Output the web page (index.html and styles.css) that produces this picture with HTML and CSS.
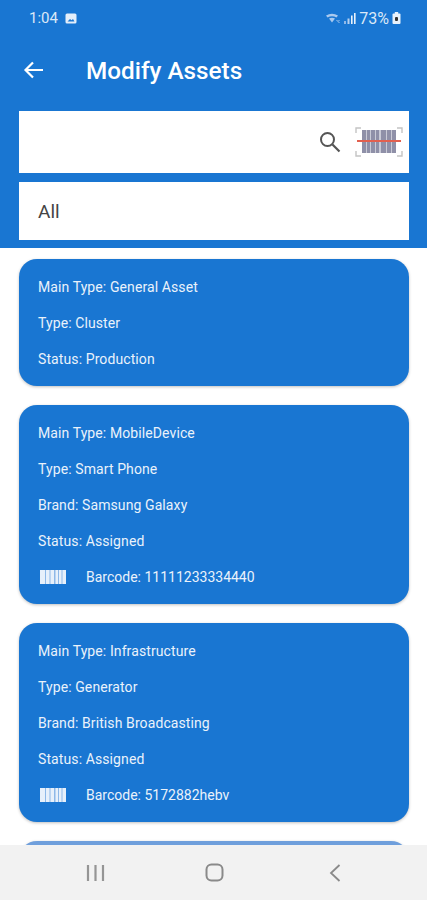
FILE: index.html
```html
<!DOCTYPE html>
<html lang="en">
<head>
  <meta charset="UTF-8" />
  <title>Modify Assets</title>
  <link rel="stylesheet" href="styles.css">
</head>
<body>
  <div class="screen">
    <header class="top">
      <div class="status-bar">
        <div class="status-left">
          <span>1:04</span>
          <svg width="12" height="11" viewBox="0 0 12 11"><rect x="0.5" y="0.5" width="11" height="10" rx="1.5" fill="#e3eefa"/><path d="M2.5 8.5 L5 6 L6.5 7.2 L8 6 L9.5 8.5 Z" fill="#1976d2"/></svg>
        </div>
        <div class="status-right">
          <svg width="15" height="11" viewBox="0 0 15 11"><path d="M0 2.500 Q6 -1 12 2.500 L10.500 4.500 Q6 2 1.500 4.500 Z M3 5.500 Q6 3.800 9 5.500 L6 9.500 Z" fill="#a9c9ee"/><path d="M10.500 7 l3 3 M13.500 7 l-1 1" stroke="#a9c9ee" stroke-width="1"/></svg>
          <svg width="12" height="12" viewBox="0 0 12 12"><rect x="0" y="9" width="2" height="3" fill="#8fb8e8"/><rect x="3.500" y="6.500" width="2" height="5.500" fill="#b5d0f0"/><rect x="7" y="3.500" width="1.600" height="8.500" fill="#e8f1fb"/><rect x="10" y="1" width="1.600" height="11" fill="#e8f1fb"/></svg>
          <span class="battery-pct">73%</span>
          <svg width="9" height="12" viewBox="0 0 9 12"><rect x="2.800" y="0" width="3.400" height="2" fill="#e8f1fb"/><rect x="0.500" y="1.500" width="8" height="10.500" rx="1" fill="#e8f1fb"/><rect x="3" y="5" width="3" height="4" rx="1" fill="#333"/></svg>
        </div>
      </div>

      <div class="app-bar">
        <svg class="back" width="24" height="24" viewBox="0 0 24 24"><path d="M21 12 H4 M11 4.500 L3.500 12 L11 19.500" fill="none" stroke="#fff" stroke-width="2.200"/></svg>
        <h1>Modify Assets</h1>
      </div>

      <div class="search-box">
        <svg class="search-icon" width="24" height="24" viewBox="0 0 24 24"><circle cx="9.500" cy="9.500" r="6.500" fill="none" stroke="#555" stroke-width="2"/><path d="M14.500 14.500 L21.500 21.500" stroke="#555" stroke-width="2.200"/></svg>
        <svg class="scan-icon" width="48" height="30" viewBox="0 0 48 30">
          <path d="M1 6 V1 H6 M42 1 H47 V6 M1 24 V29 H6 M42 29 H47 V24" fill="none" stroke="#c4c4c4" stroke-width="1.400"/>
          <rect x="7" y="3" width="34" height="23" fill="#8f90a8"/>
          <g fill="#c9cad6">
            <rect x="11" y="3" width="1" height="23"/>
            <rect x="15" y="3" width="1" height="23"/>
            <rect x="20" y="3" width="1" height="23"/>
            <rect x="24" y="3" width="2" height="23"/>
            <rect x="31" y="3" width="1" height="23"/>
            <rect x="36" y="3" width="1" height="23"/>
          </g>
          <rect x="2" y="13" width="44" height="2" fill="#e2604f"/>
        </svg>
      </div>

      <div class="select-box">All</div>
    </header>

    <main class="list">
      <section class="card">
        <p>Main Type: General Asset</p>
        <p>Type: Cluster</p>
        <p>Status: Production</p>
      </section>

      <section class="card">
        <p>Main Type: MobileDevice</p>
        <p>Type: Smart Phone</p>
        <p>Brand: Samsung Galaxy</p>
        <p>Status: Assigned</p>
        <p class="barcode">
          <svg width="26" height="14" viewBox="0 0 26 14"><rect width="26" height="14" fill="#e6f0fb"/><path d="M5 0h1v14H5z M9.500 0h1v14h-1z M14 0h1.500v14H14z M18 0h1v14h-1z M21.500 0h1v14h-1z" fill="#8db8e8"/></svg>
          <span>Barcode: 11111233334440</span>
        </p>
      </section>

      <section class="card">
        <p>Main Type: Infrastructure</p>
        <p>Type: Generator</p>
        <p>Brand: British Broadcasting</p>
        <p>Status: Assigned</p>
        <p class="barcode">
          <svg width="26" height="14" viewBox="0 0 26 14"><rect width="26" height="14" fill="#e6f0fb"/><path d="M5 0h1v14H5z M9.500 0h1v14h-1z M14 0h1.500v14H14z M18 0h1v14h-1z M21.500 0h1v14h-1z" fill="#8db8e8"/></svg>
          <span>Barcode: 5172882hebv</span>
        </p>
      </section>

      <section class="card card-faded"></section>
    </main>

    <nav class="nav-bar">
      <svg width="19" height="18" viewBox="0 0 19 18"><path d="M2 1 V17 M9.500 1 V17 M17 1 V17" stroke="#959595" stroke-width="2.200"/></svg>
      <svg class="nav-home" width="19" height="19" viewBox="0 0 19 19"><rect x="1.500" y="1.500" width="16" height="16" rx="5" fill="none" stroke="#8a8a8a" stroke-width="2"/></svg>
      <svg width="12" height="20" viewBox="0 0 12 20"><path d="M10.500 2 L2 10 L10.500 18" fill="none" stroke="#8a8a8a" stroke-width="1.800"/></svg>
    </nav>
  </div>
</body>
</html>
```

FILE: styles.css
```css
* {
  box-sizing: border-box;
}

body {
  font-family: 'Roboto', sans-serif;
  background: #fff;
  margin: 0;
}

.screen {
  width: 427px;
  height: 900px;
  display: flex;
  flex-direction: column;
  overflow: hidden;
}

.top {
  background: #1976d2;
  height: 248px;
  padding: 0 18px 0 19px;
  flex-shrink: 0;
}

.status-bar {
  height: 36px;
  display: flex;
  justify-content: space-between;
  align-items: center;
  padding: 0 8px 0 10px;
  color: #dbe8f7;
  font-size: 15px;
}

.status-left,
.status-right {
  display: flex;
  align-items: center;
}

.status-left {
  gap: 7px;
}

.status-right {
  gap: 3px;
}

.battery-pct {
  font-size: 16px;
}

.app-bar {
  height: 68px;
  display: flex;
  align-items: center;
  color: white;
}

.back {
  margin-left: 3px;
}

h1 {
  font-size: 24.3px;
  font-weight: 500;
  margin: 0 0 0 40px;
}

.search-box {
  height: 62px;
  margin-top: 7px;
  background: white;
  display: flex;
  align-items: center;
  justify-content: flex-end;
  padding-right: 6px;
  gap: 13px;
}

.select-box {
  height: 58px;
  margin-top: 9px;
  background: white;
  color: #444;
  font-size: 19px;
  display: flex;
  align-items: center;
  padding-left: 19px;
}

.list {
  flex: 1;
  min-height: 0;
  overflow: hidden;
  padding: 11px 18px 0 19px;
  display: flex;
  flex-direction: column;
  gap: 19px;
}

.card {
  flex-shrink: 0;
  background: #1976d2;
  color: #eaf2fb;
  border-radius: 18px;
  padding: 10px 19px 9px;
  font-size: 14px;
  letter-spacing: 0.1px;
  box-shadow: 0 1px 3px rgba(0, 0, 0, 0.25);
}

.card p {
  margin: 0;
  height: 36px;
  display: flex;
  align-items: center;
}

.barcode {
  gap: 20px;
  letter-spacing: 0;
}

.barcode svg {
  margin-left: 2px;
}

.card-faded {
  height: 60px;
  background: #6f9fdc;
}

.nav-bar {
  height: 55px;
  flex-shrink: 0;
  background: #f2f2f2;
  display: flex;
  align-items: center;
  padding-left: 86px;
}

.nav-home {
  margin: 0 105px 0 100px;
}
```
